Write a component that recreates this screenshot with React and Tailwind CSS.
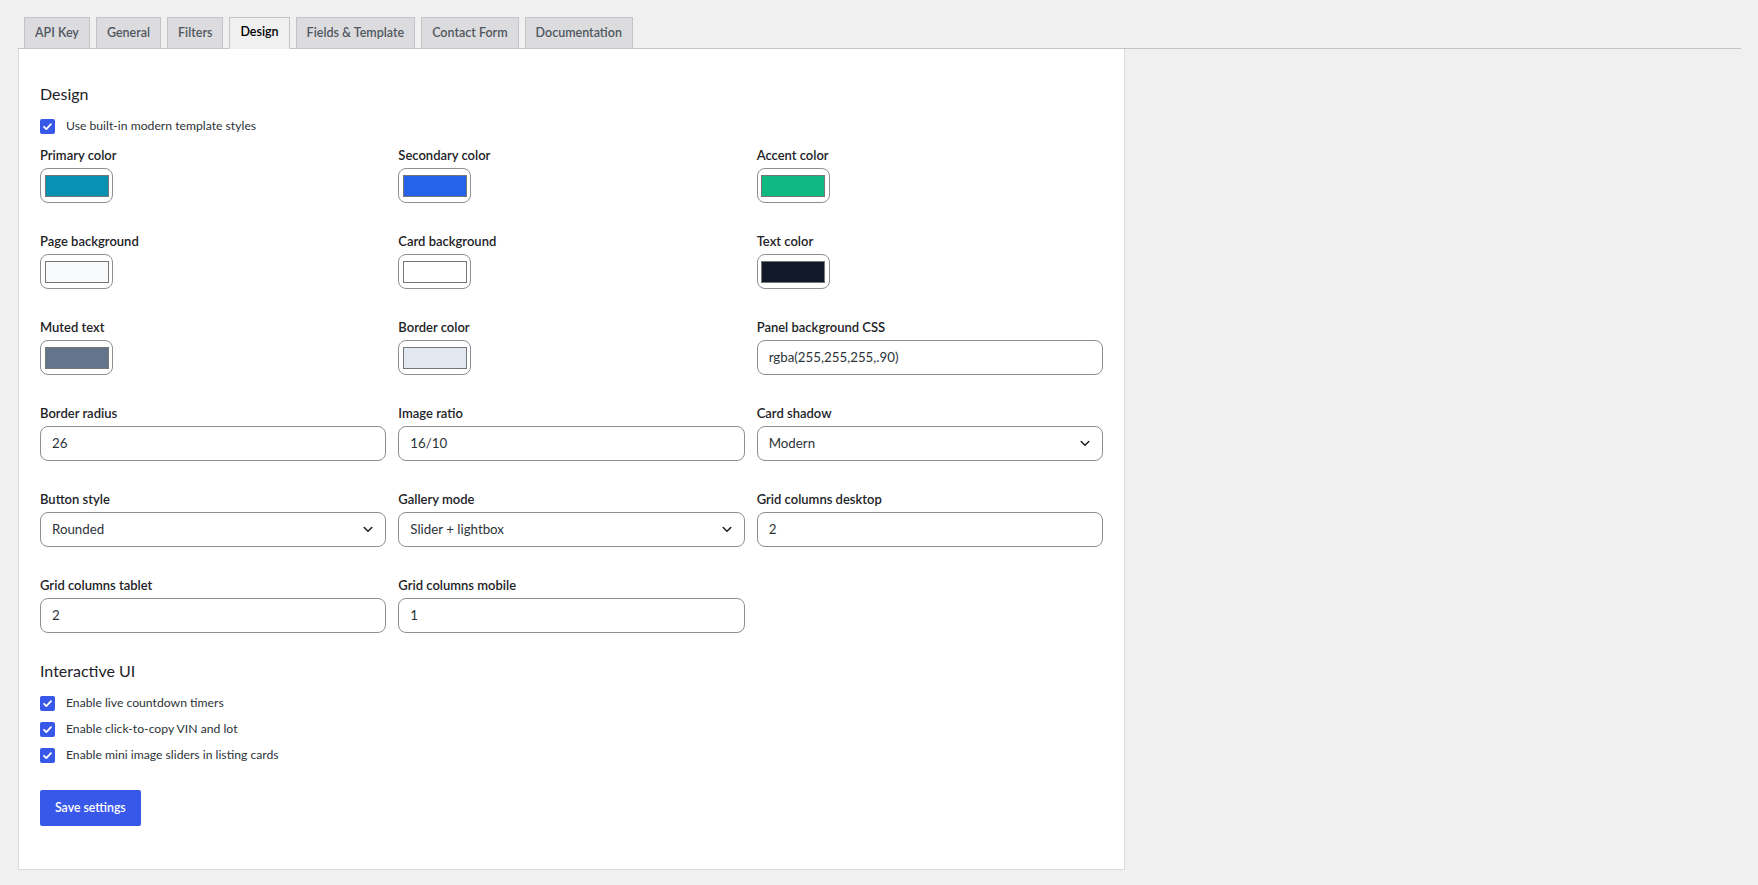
import React from "react";

const tabs = ["API Key", "General", "Filters", "Design", "Fields & Template", "Contact Form", "Documentation"];

const fields = [
  { label: "Primary color", type: "color", value: "#0891b2" },
  { label: "Secondary color", type: "color", value: "#2563eb" },
  { label: "Accent color", type: "color", value: "#10b981" },
  { label: "Page background", type: "color", value: "#f8fafc" },
  { label: "Card background", type: "color", value: "#ffffff" },
  { label: "Text color", type: "color", value: "#111827" },
  { label: "Muted text", type: "color", value: "#64748b" },
  { label: "Border color", type: "color", value: "#e2e8f0" },
  { label: "Panel background CSS", type: "text", value: "rgba(255,255,255,.90)" },
  { label: "Border radius", type: "text", value: "26" },
  { label: "Image ratio", type: "text", value: "16/10" },
  { label: "Card shadow", type: "select", value: "Modern" },
  { label: "Button style", type: "select", value: "Rounded" },
  { label: "Gallery mode", type: "select", value: "Slider + lightbox" },
  { label: "Grid columns desktop", type: "text", value: "2" },
  { label: "Grid columns tablet", type: "text", value: "2" },
  { label: "Grid columns mobile", type: "text", value: "1" },
];

function Check() {
  return (
    <span className="flex h-[15px] w-[15px] shrink-0 items-center justify-center rounded-[2px] bg-[#3858e9]">
      <svg width="11" height="11" viewBox="0 0 12 12" fill="none">
        <path d="M2.2 6.3l2.5 2.5L9.8 3.4" stroke="#fff" strokeWidth="2" strokeLinecap="round" strokeLinejoin="round" />
      </svg>
    </span>
  );
}

function CheckRow({ children }) {
  return (
    <label className="flex h-5 items-center gap-[11px] text-[12.2px] text-[#2c3338]">
      <Check />
      <span>{children}</span>
    </label>
  );
}

function Control({ field }) {
  if (field.type === "color") {
    return (
      <div className="flex h-[35px] w-[73px] items-center justify-center rounded-[8px] border border-[#8c8f94] bg-white">
        <span className="h-[22px] w-[64px] border border-[#767676]" style={{ backgroundColor: field.value }} />
      </div>
    );
  }
  if (field.type === "select") {
    return (
      <div className="flex h-[35px] items-center justify-between rounded-[8px] border border-[#8c8f94] bg-white pl-[11px] pr-[12px] text-[13.3px] text-[#2c3338]">
        <span>{field.value}</span>
        <svg width="10" height="7" viewBox="0 0 10 7" fill="none">
          <path d="M1.2 1.5L5 5.2l3.8-3.7" stroke="#1d2327" strokeWidth="1.6" strokeLinecap="round" strokeLinejoin="round" />
        </svg>
      </div>
    );
  }
  return (
    <div className="flex h-[35px] items-center rounded-[8px] border border-[#8c8f94] bg-white px-[11px] text-[13.3px] text-[#2c3338]">
      {field.value}
    </div>
  );
}

export default function App() {
  return (
    <div className="min-h-screen bg-[#f0f0f1] pl-[18px] pr-[17px] pt-[17px] font-['Lato',sans-serif] text-[#1d2327]">
      <nav className="flex items-end gap-[6px] border-b border-[#c3c4c7] pl-[6px]">
        {tabs.map((t) =>
          t === "Design" ? (
            <span
              key={t}
              className="-mb-px flex h-[32px] items-center border border-[#c3c4c7] border-b-[#f0f0f1] bg-[#f0f0f1] px-[10px] pb-px text-[12.5px] font-semibold text-black"
            >
              {t}
            </span>
          ) : (
            <span
              key={t}
              className="flex h-[31px] items-center border border-b-0 border-[#c3c4c7] bg-[#dcdcde] px-[10px] text-[12.5px] font-semibold text-[#50575e]"
            >
              {t}
            </span>
          )
        )}
      </nav>

      <div className="w-[1107px] border border-t-0 border-[#dcdcde] bg-white px-[21px] pb-[43px] pt-[33px]">
        <h2 className="text-[16px] leading-[24px] text-[#1d2327]">Design</h2>
        <div className="mt-[10px]">
          <CheckRow>Use built-in modern template styles</CheckRow>
        </div>

        <div className="mt-[10px] grid grid-cols-3 gap-x-[12px] gap-y-[29px]">
          {fields.map((f) => (
            <div key={f.label} className="flex flex-col gap-[4px]">
              <span className="text-[13px] font-semibold leading-[18px] text-[#1d2327]">{f.label}</span>
              <Control field={f} />
            </div>
          ))}
        </div>

        <h2 className="mt-[26px] text-[16px] leading-[24px] text-[#1d2327]">Interactive UI</h2>
        <div className="mt-[10px] flex flex-col gap-[6px]">
          <CheckRow>Enable live countdown timers</CheckRow>
          <CheckRow>Enable click-to-copy VIN and lot</CheckRow>
          <CheckRow>Enable mini image sliders in listing cards</CheckRow>
        </div>

        <button className="mt-[25px] flex h-[36px] items-center rounded-[2px] bg-[#3858e9] px-[15px] text-[12.3px] font-semibold text-white">
          Save settings
        </button>
      </div>
    </div>
  );
}
